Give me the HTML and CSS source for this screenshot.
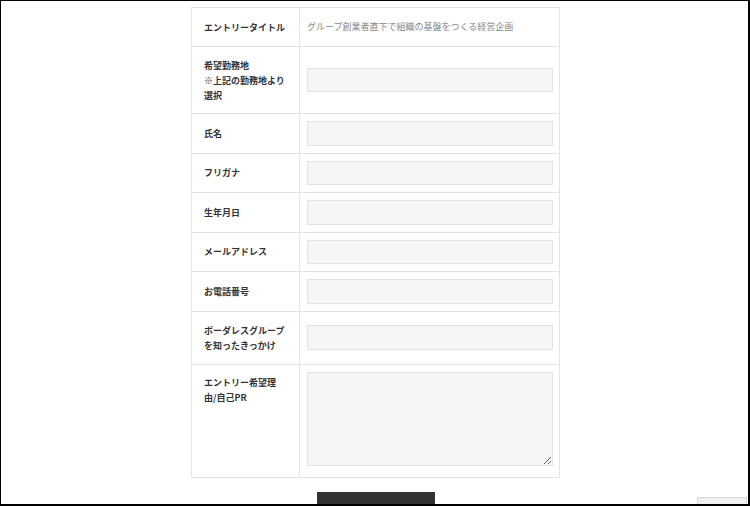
FILE: index.html
```html
<!DOCTYPE html>
<html lang="ja">
<head>
<meta charset="utf-8">
<link rel="stylesheet" href="styles.css">
</head>
<body>
<div class="frame">
  <form class="entry">
    <table class="form-table">
      <tr>
        <th>エントリータイトル</th>
        <td class="value-text">グループ創業者直下で組織の基盤をつくる経営企画</td>
      </tr>
      <tr>
        <th>希望勤務地<br>※上記の勤務地より選択</th>
        <td><input class="field" type="text"></td>
      </tr>
      <tr>
        <th>氏名</th>
        <td><input class="field" type="text"></td>
      </tr>
      <tr>
        <th>フリガナ</th>
        <td><input class="field" type="text"></td>
      </tr>
      <tr>
        <th>生年月日</th>
        <td><input class="field" type="text"></td>
      </tr>
      <tr>
        <th>メールアドレス</th>
        <td><input class="field" type="text"></td>
      </tr>
      <tr>
        <th>お電話番号</th>
        <td><input class="field" type="text"></td>
      </tr>
      <tr>
        <th class="tall">ボーダレスグループを知ったきっかけ</th>
        <td><input class="field" type="text"></td>
      </tr>
      <tr class="top-row">
        <th>エントリー希望理由/自己PR</th>
        <td><textarea class="area"></textarea></td>
      </tr>
    </table>
    <div class="actions"><button class="submit" type="button"></button></div>
  </form>
  <div class="pagetop"></div>
</div>
</body>
</html>
```

FILE: styles.css
```css
html, body {
  margin: 0;
  padding: 0;
  background: #fff;
}
body {
  font-family: "Noto Sans CJK JP", "Noto Sans", sans-serif;
  color: #333;
}
.frame {
  position: relative;
  width: 750px;
  height: 506px;
  box-sizing: border-box;
  padding-left: 2px;
  border-top: 1px solid #000;
  border-left: 1px solid #000;
  border-right: 2px solid #000;
  border-bottom: 2px solid #000;
  overflow: hidden;
}
.entry {
  width: 369px;
  margin: 6px auto 0;
}
.form-table {
  width: 369px;
  border-collapse: collapse;
  border: 1px solid #e4e4e4;
  table-layout: fixed;
}
.form-table th,
.form-table td {
  border: 1px solid #e4e4e4;
  vertical-align: middle;
}
.form-table th {
  width: 82px;
  padding: 10.5px 13px 10.5px 12px;
  text-align: left;
  font-size: 9px;
  line-height: 15px;
  font-weight: bold;
  color: #333;
}
.form-table th.tall {
  padding-top: 11px;
  padding-bottom: 11px;
}
.form-table td {
  padding: 7px 6px 7px 7px;
  font-size: 9px;
  line-height: 15px;
}
.form-table td.value-text {
  color: #888;
  padding-top: 11px;
  padding-bottom: 12px;
}
.top-row th,
.top-row td {
  vertical-align: top;
}
.top-row td {
  padding-top: 7px;
}
.field {
  display: block;
  width: 100%;
  height: 24.5px;
  box-sizing: border-box;
  margin: 0;
  border: 1px solid #e2e2e2;
  background: #f6f6f6;
  outline: none;
}
.area {
  width: 100%;
  height: 94px;
  box-sizing: border-box;
  margin: 0;
  border: 1px solid #e2e2e2;
  background: #f6f6f6;
  resize: vertical;
  vertical-align: baseline;
}
.actions {
  display: flex;
  justify-content: center;
  padding-top: 14px;
}
.submit {
  width: 118px;
  height: 40px;
  border: none;
  background: #333;
  margin: 0;
}
.pagetop {
  position: absolute;
  left: 696px;
  top: 496px;
  width: 48px;
  height: 20px;
  background: #f0f0f0;
  border: 1px solid #d8d8d8;
}
```
